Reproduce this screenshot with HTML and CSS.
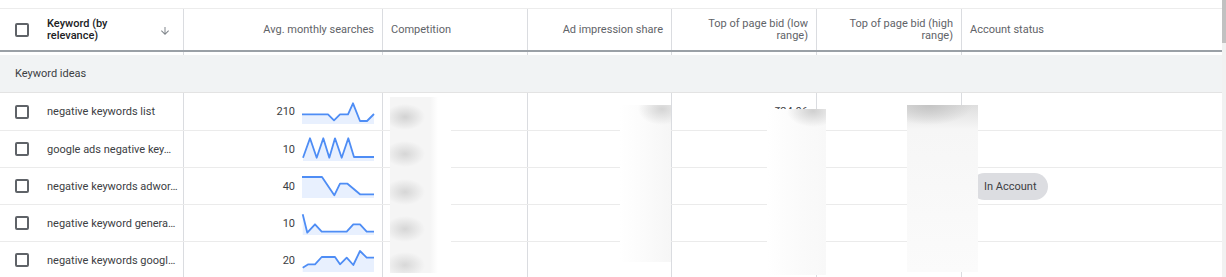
FILE: index.html
```html
<!DOCTYPE html>
<html>
<head>
<meta charset="utf-8">
<link rel="stylesheet" href="styles.css">
</head>
<body>
<div class="page">
  <div class="main">
    <div class="topbar"></div>
    <div class="grid head">
      <div class="c cb"><span class="box"></span></div>
      <div class="c kw-head"><span class="strong">Keyword (by<br>relevance)</span>
        <svg class="arrow" width="12" height="12" viewBox="0 0 24 24"><path d="M20 12l-1.41-1.41L13 16.17V4h-2v12.17l-5.58-5.59L4 12l8 8 8-8z" fill="#80868b"/></svg>
      </div>
      <div class="c r sep">Avg. monthly searches</div>
      <div class="c sep">Competition</div>
      <div class="c r sep">Ad impression share</div>
      <div class="c r sep">Top of page bid (low range)</div>
      <div class="c r sep">Top of page bid (high range)</div>
      <div class="c">Account status</div>
    </div>
    <div class="grid gap">
      <div></div><div class="sep"></div><div class="sep"></div><div class="sep"></div><div class="sep"></div><div class="sep"></div><div class="sep"></div><div></div>
    </div>
    <div class="group">Keyword ideas</div>
    <div class="body">
      <div class="grid row first">
        <div class="c cb"><span class="box"></span></div>
        <div class="c kw sep"><span class="ell">negative keywords list</span></div>
        <div class="c r sep"><span class="num">210</span>
          <svg class="spark" width="72" height="24" viewBox="0 0 72 24"><polygon points="0,14.3 26,14.3 32,20.3 38,14.3 46,14.3 51,3.3 58,21 65,21 72,14 72,24 0,24" class="fill"/><polyline points="0,14.3 26,14.3 32,20.3 38,14.3 46,14.3 51,3.3 58,21 65,21 72,14" class="line"/></svg>
        </div>
        <div class="c sep"></div>
        <div class="c sep"></div>
        <div class="c r sep"><span class="price">₹24.06</span></div>
        <div class="c sep"></div>
        <div class="c"></div>
      </div>
      <div class="grid row">
        <div class="c cb"><span class="box"></span></div>
        <div class="c kw sep"><span class="ell">google ads negative key…</span></div>
        <div class="c r sep"><span class="num">10</span>
          <svg class="spark" width="72" height="24" viewBox="0 0 72 24"><polygon points="1,20.7 8,1.3 14.7,20.7 21.3,1.3 27.3,20.7 33,1.3 39.7,20.7 46.3,1.3 52,20 72,20 72,24 1,24" class="fill"/><polyline points="1,20.7 8,1.3 14.7,20.7 21.3,1.3 27.3,20.7 33,1.3 39.7,20.7 46.3,1.3 52,20 72,20" class="line"/></svg>
        </div>
        <div class="c sep"></div>
        <div class="c sep"></div>
        <div class="c sep"></div>
        <div class="c sep"></div>
        <div class="c"></div>
      </div>
      <div class="grid row">
        <div class="c cb"><span class="box"></span></div>
        <div class="c kw sep"><span class="ell">negative keywords adwor…</span></div>
        <div class="c r sep"><span class="num">40</span>
          <svg class="spark" width="72" height="24" viewBox="0 0 72 24"><polygon points="0,3 20,3 32.3,21.3 38,9.7 45.5,9.7 58,20.3 72,20.3 72,24 0,24" class="fill"/><polyline points="0,3 20,3 32.3,21.3 38,9.7 45.5,9.7 58,20.3 72,20.3" class="line"/></svg>
        </div>
        <div class="c sep"></div>
        <div class="c sep"></div>
        <div class="c sep"></div>
        <div class="c sep"></div>
        <div class="c"><span class="chip">In Account</span></div>
      </div>
      <div class="grid row">
        <div class="c cb"><span class="box"></span></div>
        <div class="c kw sep"><span class="ell">negative keyword genera…</span></div>
        <div class="c r sep"><span class="num">10</span>
          <svg class="spark" width="72" height="24" viewBox="0 0 72 24"><polygon points="0.7,3.3 5.3,21.7 13,13.3 19.7,20.7 44.7,20.7 51.3,13.3 58,13.3 64.7,20.7 72,20.7 72,24 0.7,24" class="fill"/><polyline points="0.7,3.3 5.3,21.7 13,13.3 19.7,20.7 44.7,20.7 51.3,13.3 58,13.3 64.7,20.7 72,20.7" class="line"/></svg>
        </div>
        <div class="c sep"></div>
        <div class="c sep"></div>
        <div class="c sep"></div>
        <div class="c sep"></div>
        <div class="c"></div>
      </div>
      <div class="grid row">
        <div class="c cb"><span class="box"></span></div>
        <div class="c kw sep"><span class="ell">negative keywords googl…</span></div>
        <div class="c r sep"><span class="num">20</span>
          <svg class="spark" width="72" height="24" viewBox="0 0 72 24"><polygon points="0.7,19.7 6.3,16.3 13,16.3 19.7,9 33,9 38,16.3 44.7,9.7 51.3,17 58,3 64.7,9.7 72,9.7 72,24 0.7,24" class="fill"/><polyline points="0.7,19.7 6.3,16.3 13,16.3 19.7,9 33,9 38,16.3 44.7,9.7 51.3,17 58,3 64.7,9.7 72,9.7" class="line"/></svg>
        </div>
        <div class="c sep"></div>
        <div class="c sep"></div>
        <div class="c sep"></div>
        <div class="c sep"></div>
        <div class="c"></div>
      </div>
      <div class="blur b1"></div>
      <div class="blur b2"></div>
      <div class="blur b3"></div>
      <div class="blur b4"></div>
    </div>
  </div>
  <div class="scroll"><div class="thumb"></div></div>
</div>
</body>
</html>
```

FILE: styles.css
```css
html, body {
  margin: 0;
  padding: 0;
  background: #ffffff;
}
body {
  font-family: Roboto, "Liberation Sans", Arial, sans-serif;
  font-size: 11px;
  color: #5f6368;
  width: 1226px;
  height: 277px;
  overflow: hidden;
}
.page {
  display: flex;
  height: 277px;
}
.main {
  width: 1222px;
  flex: none;
}
.scroll {
  width: 4px;
  flex: none;
  background: #f1f1f1;
}
.thumb {
  height: 43px;
  background: #c1c1c1;
}
.topbar {
  height: 8px;
  border-bottom: 1px solid #ececec;
}
.grid {
  display: grid;
  grid-template-columns: 40px 144px 199px 145px 144px 145px 145px 260px;
}
.sep {
  border-right: 1px solid #dadce0;
}
.c {
  display: flex;
  align-items: center;
  padding: 0 8px;
  min-width: 0;
  overflow: hidden;
}
.c.r {
  justify-content: flex-end;
  text-align: right;
}
.c.cb {
  padding: 0 0 0 15px;
}
.head {
  height: 41px;
  border-bottom: 2px solid #9aa0a6;
  line-height: 12px;
}
.kw-head {
  padding: 0 12px 0 7px;
  justify-content: space-between;
  border-right: 1px solid #dadce0;
}
.strong {
  color: #202124;
  font-weight: 500;
}
.arrow {
  margin-top: 2px;
}
.gap {
  height: 3px;
}
.group {
  height: 37px;
  background: #f1f3f4;
  border-bottom: 1px solid #e3e3e3;
  display: flex;
  align-items: center;
  padding-left: 15px;
  color: #3c4043;
}
.body {
  position: relative;
}
.row {
  height: 36px;
  border-bottom: 1px solid #ebebeb;
  color: #3c4043;
}
.row.first {
  height: 37px;
}
.box {
  width: 10px;
  height: 10px;
  border: 2px solid #5f6368;
  border-radius: 2px;
  display: block;
}
.kw {
  padding-left: 7px;
}
.ell {
  white-space: nowrap;
}
.num {
  margin-right: 7px;
}
.spark {
  display: block;
  overflow: visible;
}
.spark .fill {
  fill: #e8f0fe;
}
.spark .line {
  fill: none;
  stroke: #4e8df5;
  stroke-width: 1.8;
  stroke-linejoin: round;
}
.price {
  color: #3c4043;
}
.chip {
  display: inline-flex;
  align-items: center;
  height: 27px;
  padding: 0 11px 0 13px;
  margin-left: 1px;
  border-radius: 14px;
  background: #dcdde1;
  color: #3c4043;
}
.blur {
  position: absolute;
  background: #ffffff;
}
.b1 {
  left: 390px;
  top: 4px;
  width: 61px;
  height: 176px;
  background:
    radial-gradient(ellipse 20px 13px at 15px 20px, #d2d2d2, rgba(230,230,230,0)),
    radial-gradient(ellipse 20px 13px at 15px 57px, #d6d6d6, rgba(230,230,230,0)),
    radial-gradient(ellipse 20px 13px at 15px 95px, #d6d6d6, rgba(230,230,230,0)),
    radial-gradient(ellipse 20px 13px at 15px 132px, #d6d6d6, rgba(230,230,230,0)),
    radial-gradient(ellipse 20px 13px at 15px 168px, #d8d8d8, rgba(230,230,230,0)),
    linear-gradient(to right, #f5f5f5 0, #f5f5f5 40px, #ffffff 48px);
}
.b2 {
  left: 620px;
  top: 12px;
  width: 51px;
  height: 157px;
  background:
    radial-gradient(ellipse 24px 16px at 42px 4px, #d4d4d4, rgba(240,240,240,0)),
    linear-gradient(to right, #ffffff 0, #fafafa 60%, #f6f6f6 100%);
}
.b3 {
  left: 767px;
  top: 16px;
  width: 59px;
  height: 166px;
  background:
    radial-gradient(ellipse 26px 16px at 46px 2px, #cfcfcf, rgba(240,240,240,0)),
    linear-gradient(to right, #ffffff 0, #fafafa 60%, #f8f8f8 100%);
}
.b4 {
  left: 907px;
  top: 12px;
  width: 71px;
  height: 167px;
  background:
    radial-gradient(ellipse 44px 20px at 22px 0px, #c4c4c4, rgba(235,235,235,0)),
    linear-gradient(to bottom, #dedede 0, #f6f6f6 24px, #fbfbfb 100%);
}
```
